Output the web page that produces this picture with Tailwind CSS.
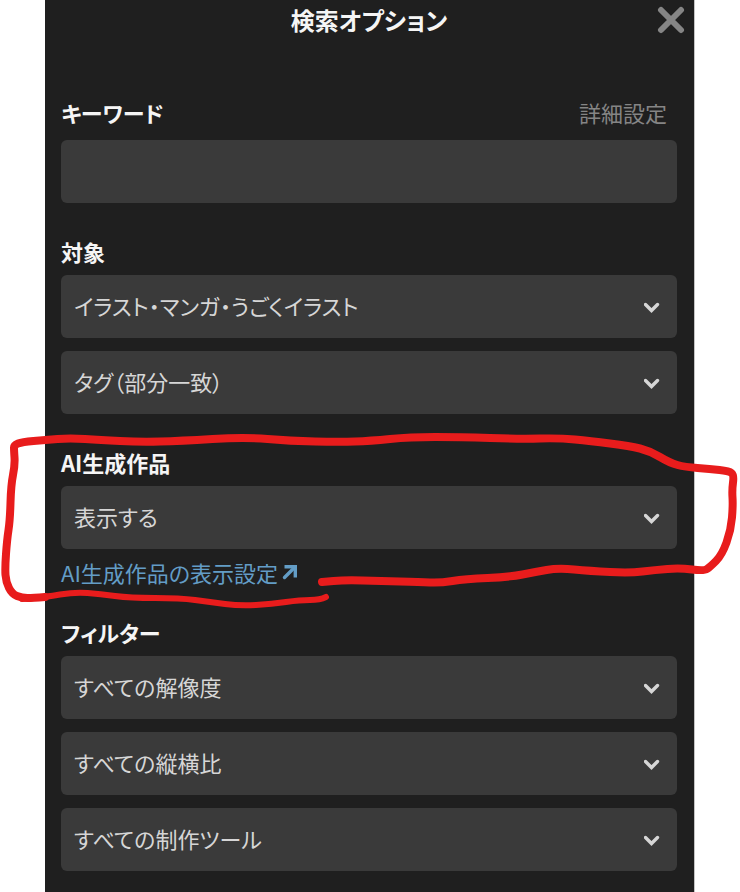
<!DOCTYPE html>
<html lang="ja">
<head>
  <meta charset="UTF-8">
  <meta name="viewport" content="width=device-width, initial-scale=1">
  <title>検索オプション</title>
  <script src="https://cdn.jsdelivr.net/npm/@tailwindcss/browser@4"></script>
</head>
<body class="relative overflow-x-hidden bg-white px-[45px] font-['Noto_Sans_CJK_JP',sans-serif] text-[22px] leading-[30px] text-[#f5f5f5] [font-feature-settings:'palt']">

  <main class="min-h-screen border-r border-[#c4c4c4] bg-[#1f1f1f] pr-[17px] pb-5 pl-4">

    <header class="grid grid-cols-[32px_1fr_32px] items-center pt-1">
      <h1 class="col-start-2 text-center text-2xl font-bold">検索オプション</h1>
      <button type="button" aria-label="閉じる" class="-mr-[10px] flex h-8 w-8 items-center justify-center justify-self-end text-[#858585]">
        <svg class="h-7 w-7" viewBox="0 0 28 28" fill="none" stroke="currentColor" stroke-width="6" stroke-linecap="round">
          <path d="M4 4l20 20M24 4L4 24"/>
        </svg>
      </button>
    </header>

    <form>
      <section class="mt-[61px]">
        <div class="mb-3 flex items-center justify-between">
          <label for="keyword" class="font-bold">キーワード</label>
          <a href="#" class="mr-[10px] text-[#858585]">詳細設定</a>
        </div>
        <input type="text" id="keyword" class="mt-[13px] block h-[63px] w-full rounded-md bg-[#3a3a3a] px-[13px] text-[#d6d6d6] outline-none">
      </section>

      <section class="mt-[33px]">
        <h2 class="mb-[9px] font-bold">対象</h2>
        <div class="space-y-[13px]">
          <div class="relative">
            <select aria-label="作品の種類" class="block h-[63px] w-full appearance-none rounded-md bg-[#3a3a3a] px-[13px] pb-1 text-[#d6d6d6]">
              <option>イラスト・マンガ・うごくイラスト</option>
            </select>
            <svg class="pointer-events-none absolute top-6 right-[17px] h-4 w-4" viewBox="0 0 16 16" fill="none" stroke="#d6d6d6" stroke-width="3.400" stroke-linecap="round"><path d="M1.500 5.500l6 6 6-6"/></svg>
          </div>
          <div class="relative">
            <select aria-label="検索方法" class="block h-[63px] w-full appearance-none rounded-md bg-[#3a3a3a] px-[13px] pb-1 text-[#d6d6d6]">
              <option>タグ（部分一致）</option>
            </select>
            <svg class="pointer-events-none absolute top-6 right-[17px] h-4 w-4" viewBox="0 0 16 16" fill="none" stroke="#d6d6d6" stroke-width="3.400" stroke-linecap="round"><path d="M1.500 5.500l6 6 6-6"/></svg>
          </div>
        </div>
      </section>

      <section class="mt-[33px]">
        <label for="ai" class="mb-[9px] block font-bold">AI生成作品</label>
        <div class="relative">
          <select id="ai" class="block h-[63px] w-full appearance-none rounded-md bg-[#3a3a3a] px-[13px] pb-1 text-[#d6d6d6]">
            <option>表示する</option>
          </select>
          <svg class="pointer-events-none absolute top-6 right-[17px] h-4 w-4" viewBox="0 0 16 16" fill="none" stroke="#d6d6d6" stroke-width="3.400" stroke-linecap="round"><path d="M1.500 5.500l6 6 6-6"/></svg>
        </div>
        <a href="#" class="mt-2 inline-flex items-center gap-1 align-top text-[#639dc6]">
          AI生成作品の表示設定
          <svg class="h-4 w-4" viewBox="0 0 16 16" fill="none" stroke="currentColor" stroke-width="3.400"><path d="M2.500 2.700h10.800V13.500"/><path d="M12.500 3.500L2.500 13.500" stroke-linecap="round"/></svg>
        </a>
      </section>

      <section class="mt-[30px]">
        <h2 class="mb-[9px] font-bold">フィルター</h2>
        <div class="space-y-[13px]">
          <div class="relative">
            <select aria-label="解像度" class="block h-[63px] w-full appearance-none rounded-md bg-[#3a3a3a] px-[13px] pb-1 text-[#d6d6d6]">
              <option>すべての解像度</option>
            </select>
            <svg class="pointer-events-none absolute top-6 right-[17px] h-4 w-4" viewBox="0 0 16 16" fill="none" stroke="#d6d6d6" stroke-width="3.400" stroke-linecap="round"><path d="M1.500 5.500l6 6 6-6"/></svg>
          </div>
          <div class="relative">
            <select aria-label="縦横比" class="block h-[63px] w-full appearance-none rounded-md bg-[#3a3a3a] px-[13px] pb-1 text-[#d6d6d6]">
              <option>すべての縦横比</option>
            </select>
            <svg class="pointer-events-none absolute top-6 right-[17px] h-4 w-4" viewBox="0 0 16 16" fill="none" stroke="#d6d6d6" stroke-width="3.400" stroke-linecap="round"><path d="M1.500 5.500l6 6 6-6"/></svg>
          </div>
          <div class="relative">
            <select aria-label="制作ツール" class="block h-[63px] w-full appearance-none rounded-md bg-[#3a3a3a] px-[13px] pb-1 text-[#d6d6d6]">
              <option>すべての制作ツール</option>
            </select>
            <svg class="pointer-events-none absolute top-6 right-[17px] h-4 w-4" viewBox="0 0 16 16" fill="none" stroke="#d6d6d6" stroke-width="3.400" stroke-linecap="round"><path d="M1.500 5.500l6 6 6-6"/></svg>
          </div>
        </div>
      </section>
    </form>
  </main>

  <!-- red pen mark around the AI section -->
  <svg class="pointer-events-none absolute top-[430px] left-0 h-[180px] w-full" viewBox="0 430 740 180" preserveAspectRatio="none" fill="none" stroke="#e81c1c" stroke-linecap="round" stroke-linejoin="round" aria-hidden="true">
    <path id="pen-bottom" stroke-width="6"/>
    <path id="pen-loop" stroke-width="8"/>
  </svg>

  <script>
    const bottom = [[326,597],[320,600],[300,600],[272,604],[240,606],[210,602],[180,598],[130,598],[100,594],[75,592],[45,597],[22,599]];
    const loop = [[45,597],[33,598],[22,598],[12,594],[6,582],[5,568],[7,540],[10,520],[11,485],[15,465],[14,450],[14,445],[22,442],[45,440],[70,438],[100,440],[140,442],[180,441],[245,437],[290,441],[340,442],[370,441],[410,437],[460,437],[520,439],[560,438],[590,441],[630,446],[650,451],[670,463],[685,467],[710,469],[729,471],[734,475],[732,490],[733,505],[731,530],[722,555],[710,567],[704,571],[680,568],[655,570],[630,573],[590,571],[558,568],[535,572],[510,577],[465,579],[440,583],[420,582],[380,581],[345,580],[322,582]];

    // smooth line through the midpoints
    function penPath(points) {
      let d = `M${points[0]}`;
      for (let i = 1; i < points.length - 1; i++) {
        const [x, y] = points[i];
        const [nx, ny] = points[i + 1];
        d += ` Q${x} ${y} ${(x + nx) / 2} ${(y + ny) / 2}`;
      }
      return d + ` L${points[points.length - 1]}`;
    }

    document.getElementById('pen-bottom').setAttribute('d', penPath(bottom));
    document.getElementById('pen-loop').setAttribute('d', penPath(loop));
  </script>

</body>
</html>
